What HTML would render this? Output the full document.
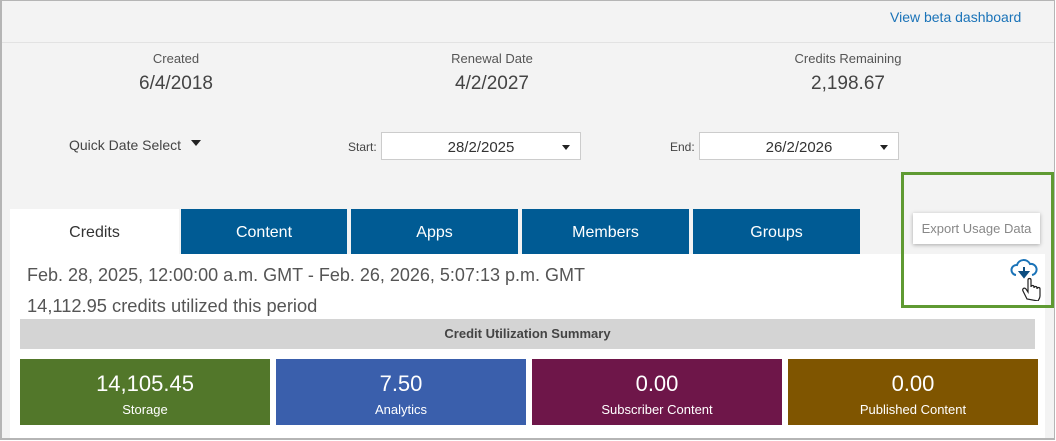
<!DOCTYPE html>
<html><head><style>
*{margin:0;padding:0;box-sizing:border-box}
body{width:1056px;height:441px;background:#fff;font-family:"Liberation Sans",sans-serif;position:relative;overflow:hidden}
.frame{position:absolute;left:0;top:0;width:1055px;height:440px;border:1px solid #b5b5b5;border-width:1px 1px 2px 2px;background:#f3f3f3}
.a{position:absolute}
.hdr{left:2px;top:42px;width:1052px;height:1px;background:#e2e2e2}
.lbl{font-size:13px;color:#555;text-align:center;width:200px}
.val{font-size:18px;color:#444;text-align:center;width:200px}
.sel{background:#fff;border:1px solid #ccc;height:28px;font-size:15px;color:#333;text-align:center;line-height:29px}
.tri{position:absolute;right:10px;top:12px;border-left:4px solid transparent;border-right:4px solid transparent;border-top:5px solid #222}
.tab{top:209px;height:45px;background:#005b94;color:#fff;font-size:16px;text-align:center;line-height:48px}
.card{top:359px;width:250px;height:66px;color:#fff;text-align:center}
.card b{display:block;font-weight:normal;font-size:22px;margin-top:12px}
.card span{display:block;font-size:13px;margin-top:5px}
</style></head><body>
<div class="frame"></div>
<div class="a hdr"></div>
<div class="a" style="left:890px;top:9px;font-size:14px;color:#1a73b8">View beta dashboard</div>
<div class="a lbl" style="left:76px;top:51px">Created</div>
<div class="a val" style="left:76px;top:73px;font-size:19px">6/4/2018</div>
<div class="a lbl" style="left:392px;top:51px">Renewal Date</div>
<div class="a val" style="left:392px;top:73px;font-size:19px">4/2/2027</div>
<div class="a lbl" style="left:748px;top:51px">Credits Remaining</div>
<div class="a val" style="left:748px;top:73px;font-size:19px">2,198.67</div>
<div class="a" style="left:69px;top:137px;font-size:14px;color:#444">Quick Date Select</div>
<div class="a" style="left:191px;top:140px;border-left:5px solid transparent;border-right:5px solid transparent;border-top:6px solid #222"></div>
<div class="a" style="left:348px;top:140px;font-size:12px;color:#444">Start:</div>
<div class="a sel" style="left:381px;top:132px;width:200px">28/2/2025<i class="tri"></i></div>
<div class="a" style="left:670px;top:140px;font-size:12px;color:#444">End:</div>
<div class="a sel" style="left:699px;top:132px;width:200px">26/2/2026<i class="tri"></i></div>
<div class="a" style="left:10px;top:254px;width:1035px;height:184px;background:#fff"></div>
<div class="a tab" style="left:10px;width:169px;background:#fff;color:#333">Credits</div>
<div class="a tab" style="left:181px;width:166px">Content</div>
<div class="a tab" style="left:351px;width:167px">Apps</div>
<div class="a tab" style="left:522px;width:167px">Members</div>
<div class="a tab" style="left:693px;width:167px">Groups</div>
<div class="a" style="left:27px;top:265px;font-size:18px;color:#555">Feb. 28, 2025, 12:00:00 a.m. GMT - Feb. 26, 2026, 5:07:13 p.m. GMT</div>
<div class="a" style="left:27px;top:295px;font-size:18.3px;color:#555">14,112.95 credits utilized this period</div>
<div class="a" style="left:20px;top:319px;width:1015px;height:30px;background:#d4d4d4;font-size:13px;font-weight:bold;color:#444;text-align:center;line-height:30px">Credit Utilization Summary</div>
<div class="a card" style="left:20px;background:#52772a"><b>14,105.45</b><span>Storage</span></div>
<div class="a card" style="left:276px;background:#3a5fac"><b>7.50</b><span>Analytics</span></div>
<div class="a card" style="left:532px;background:#6e1649"><b>0.00</b><span>Subscriber Content</span></div>
<div class="a card" style="left:788px;background:#7f5500"><b>0.00</b><span>Published Content</span></div>
<div class="a" style="left:901px;top:172px;width:153px;height:136px;border:3px solid #5f9a32"></div>
<div class="a" style="left:913px;top:213px;width:127px;height:31px;background:#fff;box-shadow:0 1px 4px rgba(0,0,0,.3);font-size:13px;color:#888;line-height:31px;text-align:center">Export Usage Data</div>
<svg class="a" style="left:1008px;top:257px" width="36" height="44" viewBox="0 0 36 44">
<path d="M8 18a5 5 0 0 1 1-10 7 7 0 0 1 13-1 5 5 0 0 1 2 11" fill="none" stroke="#1a73b8" stroke-width="2"/>
<path d="M16 10v9M12 15l4 5 4-5z" fill="#0d4d80" stroke="#0d4d80" stroke-width="2"/>
<path d="M19 42l-4-8c-1-2 1-4 3-2l2 3v-12c0-2 3-2 3 0v7c0-2 3-2 3 0v1c0-2 3-2 3 0v1c0-2 3-2 3 0v7c0 2-1 3-2 5z" fill="#fff" stroke="#222" stroke-width="1.2"/>
</svg>
</body></html>
